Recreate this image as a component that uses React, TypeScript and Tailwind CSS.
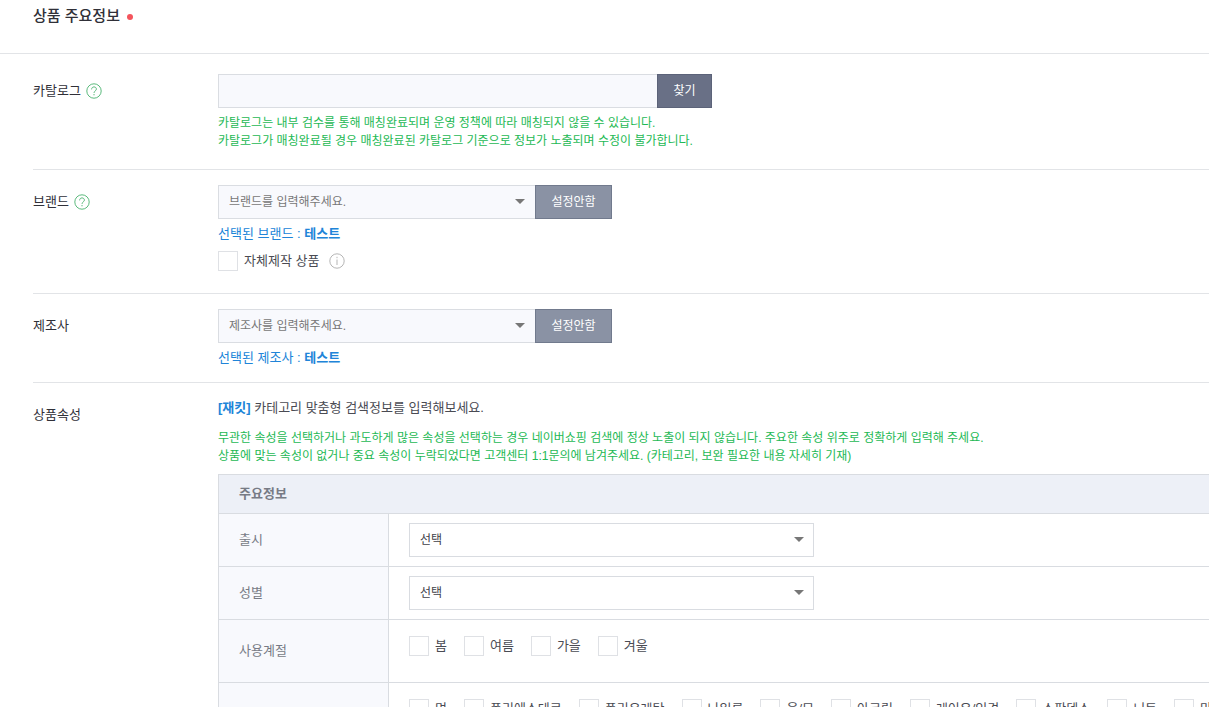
import type { ReactNode } from "react";

const seasons = ["봄", "여름", "가을", "겨울"];
const materials = ["면", "폴리에스테르", "폴리우레탄", "나일론", "울/모", "아크릴", "레이온/인견", "스판덱스", "니트", "마"];

function Arrow() {
  return (
    <svg className="pointer-events-none absolute right-[10px] top-[14px]" width="10" height="5" viewBox="0 0 10 5" aria-hidden="true">
      <path d="M0 0h10L5 5z" fill="#777" />
    </svg>
  );
}

function HelpIcon() {
  return (
    <svg width="16" height="16" viewBox="0 0 16 16" fill="none" stroke="#5cba7d" aria-hidden="true">
      <circle cx="8" cy="8" r="7.2" />
      <path d="M5.6 6.4c0-1.5 1-2.5 2.4-2.5s2.4.9 2.4 2.2c0 1.8-2.4 1.9-2.4 3.8" />
      <path d="M8 11v1.3" />
    </svg>
  );
}

function InfoIcon() {
  return (
    <svg width="16" height="16" viewBox="0 0 16 16" fill="none" stroke="#b5b5b5" aria-hidden="true">
      <circle cx="8" cy="8" r="7.2" />
      <path d="M8 6.5v5.5M8 3.8v1.4" />
    </svg>
  );
}

function Row({ label, id, help, className, children }: { label: string; id?: string; help?: boolean; className: string; children: ReactNode }) {
  return (
    <div className={`ml-[33px] flex ${className}`}>
      <div className="flex h-[34px] w-[185px] shrink-0 items-center gap-[5px] text-[#303038]">
        {id ? <label htmlFor={id}>{label}</label> : <span>{label}</span>}
        {help && (
          <button type="button" aria-label={`${label} 도움말`}>
            <HelpIcon />
          </button>
        )}
      </div>
      <div className="min-w-0 grow">{children}</div>
    </div>
  );
}

function ComboInput({ id, placeholder }: { id: string; placeholder: string }) {
  return (
    <div className="flex max-w-[394px]">
      <div className="relative grow">
        <input
          id={id}
          type="text"
          placeholder={placeholder}
          className="h-[34px] w-full border border-r-0 border-[#dadde2] bg-[#f8f9fd] pl-[10px] pr-8 text-xs placeholder:text-[#777]"
        />
        <Arrow />
      </div>
      <button type="button" className="h-[34px] w-[77px] shrink-0 border border-[#717a8d] bg-[#8a92a4] text-xs text-white">
        설정안함
      </button>
    </div>
  );
}

function Check({ label }: { label: string }) {
  return (
    <label className="flex shrink-0 items-center gap-[6px] leading-5 text-[#4a4b53]">
      <input type="checkbox" className="size-5 appearance-none border border-[#dfe1e5] bg-white checked:bg-[#00b843]" />
      {label}
    </label>
  );
}

function AttributeRow({ label, children }: { label: string; children: ReactNode }) {
  return (
    <tr>
      <th scope="row" className="border-r border-[#d9dce1] bg-[#f8f9fd] pl-5 text-left font-normal text-[#777b85]">
        {label}
      </th>
      <td className="overflow-hidden pl-5">{children}</td>
    </tr>
  );
}

function AttributeSelect({ label }: { label: string }) {
  return (
    <div className="relative my-[9px] max-w-[405px]">
      <select aria-label={label} className="block h-[34px] w-full appearance-none border border-[#d9dce1] bg-white pl-[10px] pr-8 text-xs text-[#404148]">
        <option>선택</option>
      </select>
      <Arrow />
    </div>
  );
}

export default function App() {
  return (
    <main className="h-screen overflow-hidden bg-white font-['Liberation_Sans','Noto_Sans_CJK_KR',sans-serif] text-[13px] leading-5">
      <header className="flex h-[54px] items-start gap-[7px] border-b border-[#e2e4e7] pl-[33px] pt-1">
        <h2 className="text-[15px] font-medium leading-6 text-[#303038]">상품 주요정보</h2>
        <span className="mt-[10px] size-[6px] rounded-full bg-[#f4545c]" />
      </header>

      <Row label="카탈로그" id="catalog" help className="border-b border-[#e2e4e7] pb-[19px] pt-5">
        <div className="flex max-w-[494px]">
          <input id="catalog" type="text" className="h-[34px] min-w-0 grow border border-r-0 border-[#dadde2] bg-[#f8f9fd] px-[10px] text-xs" />
          <button type="button" className="h-[34px] w-[55px] shrink-0 border border-[#5c6379] bg-[#697086] text-xs text-white">
            찾기
          </button>
        </div>
        <p className="mt-[6px] text-xs leading-[18px] text-[#1db954]">
          카탈로그는 내부 검수를 통해 매칭완료되며 운영 정책에 따라 매칭되지 않을 수 있습니다.
          <br />
          카탈로그가 매칭완료될 경우 매칭완료된 카탈로그 기준으로 정보가 노출되며 수정이 불가합니다.
        </p>
      </Row>

      <Row label="브랜드" id="brand" help className="border-b border-[#e2e4e7] pb-[22px] pt-[15px]">
        <ComboInput id="brand" placeholder="브랜드를 입력해주세요." />
        <p className="mt-[5px] text-[#2084d8]">
          선택된 브랜드 : <b className="font-bold">테스트</b>
        </p>
        <div className="mt-[7px] flex items-center gap-[10px]">
          <Check label="자체제작 상품" />
          <button type="button" aria-label="자체제작 상품 안내">
            <InfoIcon />
          </button>
        </div>
      </Row>

      <Row label="제조사" id="maker" className="border-b border-[#e2e4e7] pb-[14px] pt-[15px]">
        <ComboInput id="maker" placeholder="제조사를 입력해주세요." />
        <p className="mt-[5px] text-[#2084d8]">
          선택된 제조사 : <b className="font-bold">테스트</b>
        </p>
      </Row>

      <Row label="상품속성" className="pt-[15px]">
        <p className="text-[#4a4b53]">
          <b className="font-bold text-[#2084d8]">[재킷]</b> 카테고리 맞춤형 검색정보를 입력해보세요.
        </p>
        <p className="mb-[9px] mt-[11px] text-xs leading-[18px] text-[#1db954]">
          무관한 속성을 선택하거나 과도하게 많은 속성을 선택하는 경우 네이버쇼핑 검색에 정상 노출이 되지 않습니다. 주요한 속성 위주로 정확하게 입력해 주세요.
          <br />
          상품에 맞는 속성이 없거나 중요 속성이 누락되었다면 고객센터 1:1문의에 남겨주세요. (카테고리, 보완 필요한 내용 자세히 기재)
        </p>
        <table className="w-full table-fixed border-separate border-spacing-0 border-l border-t border-[#d9dce1] [&_td]:border-b [&_td]:border-[#d9dce1] [&_th]:border-b">
          <colgroup>
            <col className="w-[170px]" />
            <col />
          </colgroup>
          <thead>
            <tr>
              <th colSpan={2} className="h-[39px] border-[#d9dce1] bg-[#edf0f7] pl-5 text-left font-bold text-[#777b85]">
                주요정보
              </th>
            </tr>
          </thead>
          <tbody>
            <AttributeRow label="출시">
              <AttributeSelect label="출시" />
            </AttributeRow>
            <AttributeRow label="성별">
              <AttributeSelect label="성별" />
            </AttributeRow>
            <AttributeRow label="사용계절">
              <div className="flex gap-[17px] pb-[26px] pt-4">
                {seasons.map((name) => (
                  <Check key={name} label={name} />
                ))}
              </div>
            </AttributeRow>
            <AttributeRow label="">
              <div className="flex gap-[17px] pb-[26px] pt-4">
                {materials.map((name) => (
                  <Check key={name} label={name} />
                ))}
              </div>
            </AttributeRow>
          </tbody>
        </table>
      </Row>
    </main>
  );
}
